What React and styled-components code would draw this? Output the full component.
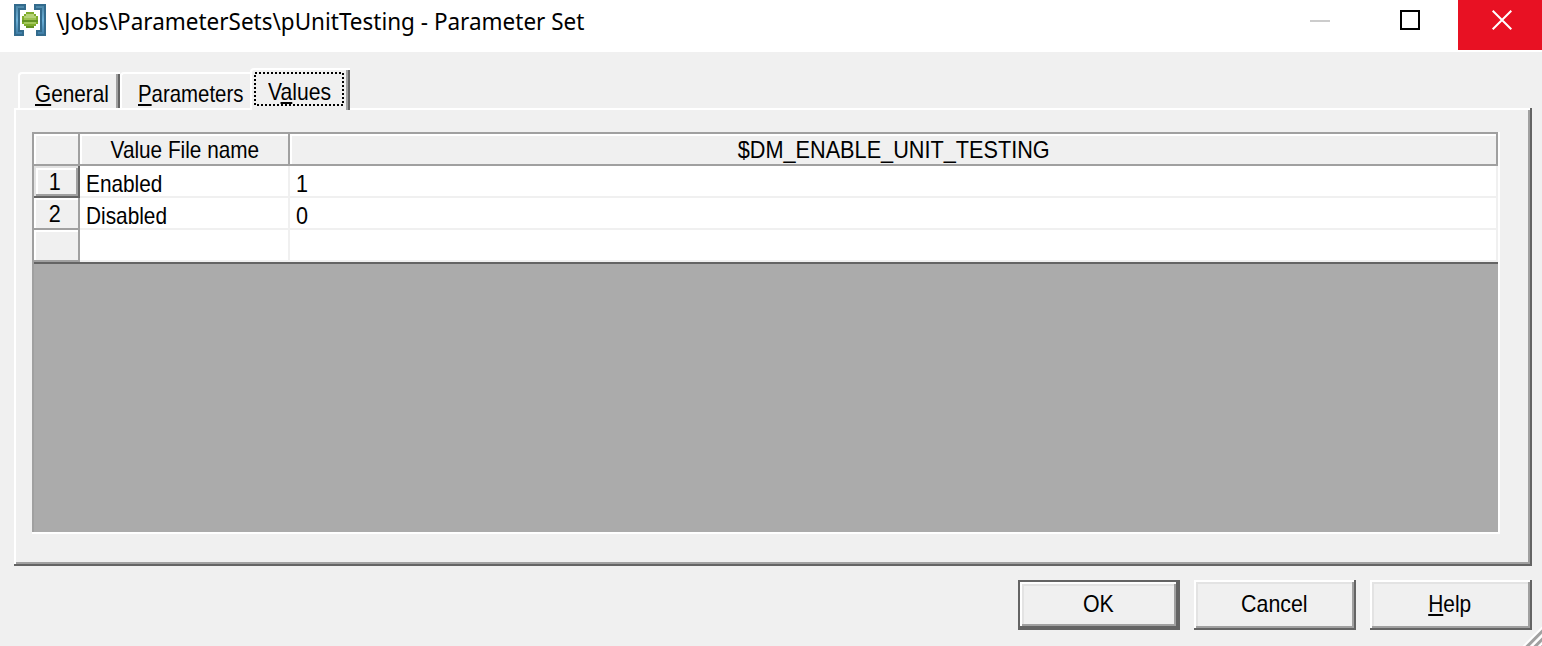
import React from "react";
import styled, { createGlobalStyle, css } from "styled-components";

const face = "#f0f0f0";
const shadow = "#a0a0a0";
const dark = "#646464";
const light = "#e3e3e3";

const GlobalStyle = createGlobalStyle`
  *, *::before, *::after { box-sizing: border-box; }
  body { margin: 0; background: ${face}; overflow: hidden; }
  button { margin: 0; padding: 0; border: 0; font: inherit; color: inherit; }
`;

const Dialog = styled.div`
  position: relative;
  display: flex;
  flex-direction: column;
  width: 1542px;
  height: 646px;
  background: ${face};
  color: #000;
  font: 24px/28px "Liberation Sans", Arial, sans-serif;
  overflow: hidden;
`;

const TitleBar = styled.header`
  display: flex;
  align-items: flex-start;
  height: 52px;
  padding-left: 14px;
  background: #fff;
`;

const AppIcon = styled.svg`
  flex: none;
  width: 32px;
  height: 32px;
  margin: 4px 10px 0 0;
`;

const Title = styled.h1`
  flex: 1;
  margin: 0;
  padding-top: 5px;
  font: 24px/32px "Noto Sans", sans-serif;
  white-space: nowrap;
`;

const WindowButton = styled.button`
  display: flex;
  justify-content: center;
  width: ${(p) => p.$width}px;
  height: 50px;
  padding-top: 10px;
  padding-right: ${(p) => p.$right || 0}px;
  background: ${(p) => (p.$close ? "#e81123" : "#fff")};
`;

const Label = styled.span`
  display: inline-block;
  white-space: nowrap;
  transform: scaleX(${(p) => p.$stretch});
  transform-origin: ${(p) => (p.$center ? "center" : "left")};
`;

const Key = styled.span`
  text-decoration: underline;
  text-decoration-thickness: 2px;
  text-decoration-skip-ink: none;
  text-underline-offset: 2px;
`;

const Content = styled.main`
  display: flex;
  flex-direction: column;
  padding: 16px 10px 16px 14px;
`;

const TabList = styled.div`
  display: flex;
  align-items: flex-end;
  height: 40px;
  padding-left: 4px;
`;

const Tab = styled.button`
  position: relative;
  display: flex;
  width: ${(p) => p.$width}px;
  height: 36px;
  border: 0 solid #fff;
  border-width: 2px 0 0 2px;
  border-top-left-radius: 4px;
  background: ${face};
  padding: 6px 0 0 ${(p) => p.$indent}px;
  ${(p) =>
    p.$edge &&
    css`
      &::after {
        content: "";
        position: absolute;
        top: 0;
        right: 0;
        bottom: 0;
        width: 4px;
        border-right: 2px solid ${dark};
        border-left: 2px solid ${shadow};
      }
    `}
  ${(p) =>
    p.$active &&
    css`
      z-index: 1;
      height: 42px;
      margin-bottom: -2px;
      padding-top: 8px;
    `}
`;

const FocusRing = styled.svg`
  position: absolute;
  top: 2px;
  left: 2px;
`;

const Panel = styled.section`
  height: 458px;
  padding: 24px 30px 30px 18px;
  box-shadow: inset -2px -2px ${dark}, inset 2px 2px #fff,
    inset -4px -4px ${shadow};
`;

const Grid = styled.div`
  width: 1468px;
  height: 402px;
  padding: 2px;
  background: #ababab;
  box-shadow: inset -2px -2px #fff, inset 2px 2px ${shadow};
`;

const Row = styled.div`
  display: grid;
  grid-template-columns: 46px 210px 1208px;
  height: 32px;
`;

const Rows = styled.div`
  border-bottom: 2px solid ${dark};
`;

const HeadCell = styled.div`
  height: 32px;
  padding: 2px;
  background: ${face};
  box-shadow: inset -2px -2px ${shadow}, inset 2px 2px #fff;
  text-align: center;
  line-height: 28px;
`;

const RowHead = styled(HeadCell)`
  padding-right: 6px;
  line-height: 27px;
  ${(p) =>
    p.$current &&
    css`
      box-shadow: inset -2px -2px ${dark}, inset 2px 2px ${light},
        inset -4px -4px ${shadow}, inset 4px 4px #fff;
    `}
`;

const Cell = styled.div`
  height: 32px;
  padding: 5px 0 0 6px;
  border: 0 solid ${face};
  border-width: 0 2px 2px 0;
  background: #fff;
  line-height: 25px;
`;

const Actions = styled.footer`
  display: flex;
  justify-content: flex-end;
  gap: 14px;
  padding-top: 14px;
`;

const ActionButton = styled.button`
  width: 162px;
  height: 50px;
  padding: 0 2px 2px 0;
  background: ${face};
  box-shadow: inset -2px -2px ${dark}, inset 2px 2px #fff,
    inset -4px -4px ${shadow}, inset 4px 4px ${light};
  text-align: center;
  ${(p) =>
    p.$primary &&
    css`
      border: 2px solid ${dark};
    `}
`;

const Grip = styled.svg`
  position: absolute;
  right: 0;
  bottom: 0;
`;

const rows = [
  { id: "1", name: "Enabled", value: "1", current: true },
  { id: "2", name: "Disabled", value: "0" },
  { id: "", name: "", value: "" },
];

function ParameterSetIcon() {
  return (
    <AppIcon viewBox="0 0 32 32" shapeRendering="crispEdges">
      <defs>
        <linearGradient id="steel" x1="0" y1="0" x2="0" y2="1">
          <stop offset="0" stopColor="#4d87a8" />
          <stop offset=".5" stopColor="#6db1d8" />
          <stop offset="1" stopColor="#3f7da6" />
        </linearGradient>
      </defs>
      <path d="M0 0h12v6H6v20h4v6H0zM20 0h12v32H22v-6h4V6h-6z" fill="#336b8d" />
      <path d="M2 2h8v2H4v24h4v2H2zM22 2h8v28h-6v-2h4V4h-6z" fill="url(#steel)" />
      <path d="M12 8h8v2h2v2h2v8h-2v2h-2v2h-8v-2h-2v-2H8v-8h2v-2h2z" fill="#7fac2b" />
      <path d="M12 10h8v2h2v2H10v-2h2z" fill="#b5d178" />
      <path d="M10 14h12v2H10z" fill="#9cc052" />
      <path d="M10 18h12v2H10z" fill="#a4c95c" />
      <path d="M8 16h16v2H8zM12 22h8v2h-8z" fill="#649322" />
    </AppIcon>
  );
}

export default function App() {
  return (
    <Dialog>
      <GlobalStyle />
      <TitleBar>
        <ParameterSetIcon />
        <Title>
          <Label $stretch={0.937}>\Jobs\ParameterSets\pUnitTesting - Parameter Set</Label>
        </Title>
        <WindowButton $width={92} aria-label="Minimize">
          <svg width="20" height="20">
            <path d="M0 10h20v2H0z" fill="#ccc" />
          </svg>
        </WindowButton>
        <WindowButton $width={92} $right={4} aria-label="Maximize">
          <svg width="20" height="20">
            <path d="M1 1h18v18H1z" fill="none" stroke="#000" strokeWidth="2" />
          </svg>
        </WindowButton>
        <WindowButton $width={84} $close aria-label="Close">
          <svg width="24" height="20" viewBox="-4 0 24 20">
            <path d="M.7.7l18.6 18.6M19.3.7L.7 19.3" stroke="#fff" strokeWidth="2" />
          </svg>
        </WindowButton>
      </TitleBar>
      <Content>
        <TabList>
          <Tab $width={102} $indent={15} $edge>
            <Label $stretch={0.865}>
              <Key>G</Key>eneral
            </Label>
          </Tab>
          <Tab $width={130} $indent={16}>
            <Label $stretch={0.85}>
              <Key>P</Key>arameters
            </Label>
          </Tab>
          <Tab $width={100} $indent={16} $edge $active>
            <FocusRing width="90" height="34">
              <rect
                x="1"
                y="1"
                width="88"
                height="32"
                fill="none"
                stroke="#000"
                strokeWidth="2"
                strokeDasharray="2 2"
              />
            </FocusRing>
            <Label $stretch={0.88}>
              V<Key>a</Key>lues
            </Label>
          </Tab>
        </TabList>
        <Panel>
          <Grid>
            <Row>
              <HeadCell />
              <HeadCell>
                <Label $center $stretch={0.865}>Value File name</Label>
              </HeadCell>
              <HeadCell>
                <Label $center $stretch={0.903}>$DM_ENABLE_UNIT_TESTING</Label>
              </HeadCell>
            </Row>
            <Rows>
              {rows.map((row, i) => (
                <Row key={i}>
                  <RowHead $current={row.current}>
                    <Label $center $stretch={0.9}>{row.id}</Label>
                  </RowHead>
                  <Cell>
                    <Label $stretch={0.867}>{row.name}</Label>
                  </Cell>
                  <Cell>
                    <Label $stretch={0.9}>{row.value}</Label>
                  </Cell>
                </Row>
              ))}
            </Rows>
          </Grid>
        </Panel>
        <Actions>
          <ActionButton $primary>
            <Label $center $stretch={0.89}>OK</Label>
          </ActionButton>
          <ActionButton>
            <Label $center $stretch={0.89}>Cancel</Label>
          </ActionButton>
          <ActionButton>
            <Label $center $stretch={0.87}>
              <Key>H</Key>elp
            </Label>
          </ActionButton>
        </Actions>
      </Content>
      <Grip width="20" height="20">
        <path d="M1 21L21 1M9 21L21 9M17 21L21 17" stroke="#fff" strokeWidth="2" />
        <path d="M4.500 21L21 4.500M12.500 21L21 12.500M20 21L21 20" stroke={shadow} strokeWidth="3" />
      </Grip>
    </Dialog>
  );
}
